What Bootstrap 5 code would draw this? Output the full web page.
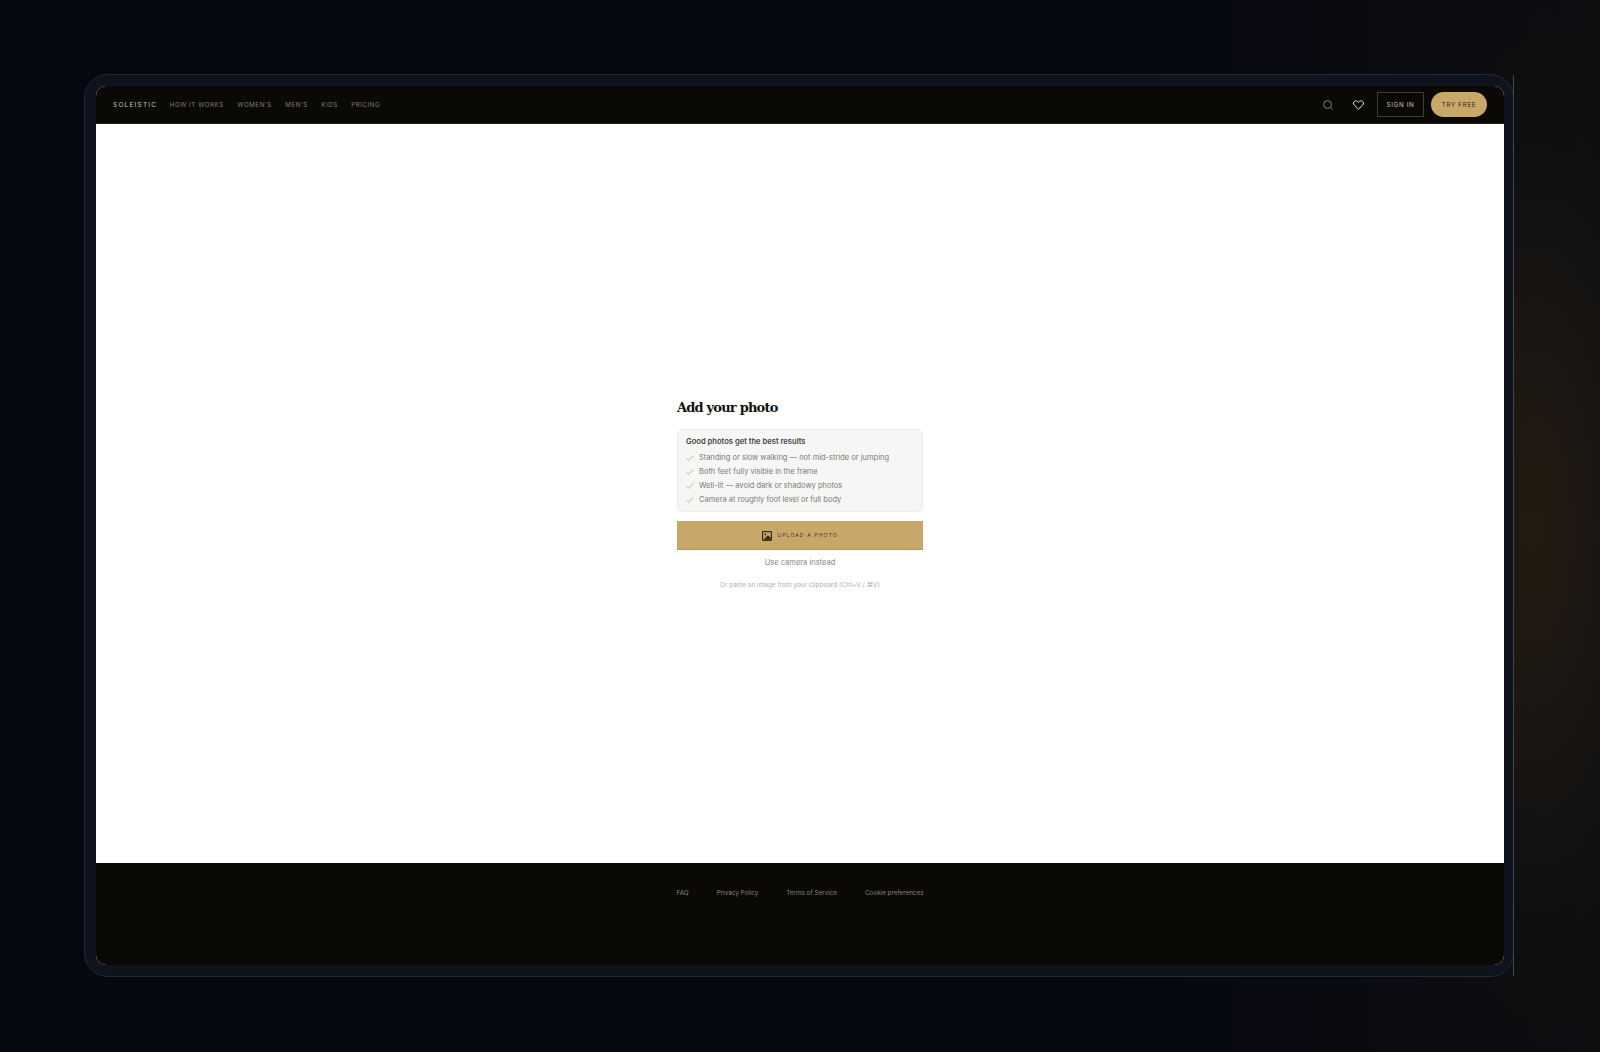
<!DOCTYPE html>
<html lang="en"><head><meta charset="utf-8"><title>Soleistic</title>
<link href="https://cdn.jsdelivr.net/npm/bootstrap@5.3.0/dist/css/bootstrap.min.css" rel="stylesheet">
<style>
html,body{height:100%}
body{background:radial-gradient(ellipse 190px 560px at 1535px 530px,#241b10 0%,rgba(27,23,18,.9) 35%,rgba(18,17,17,.45) 70%,rgba(14,14,16,0) 100%),linear-gradient(90deg,#060810 0,#060810 70%,#0e0e11 100%);font-family:"Inter","Noto Sans",sans-serif;overflow:hidden}
.stage{height:1052px;padding:74px 86px 75px 84px}
.device{height:903px;padding:11px 9px 11px 11px;background:#0f131d;border:1px solid #232835;border-radius:24px;position:relative}
.device::after{content:"";position:absolute;right:-1px;top:0;bottom:0;width:1px;background:#45464a}
.screen{height:100%;border-radius:10px;overflow:hidden;background:#fff}
.topbar{height:38px;background:#0b0906;padding:0 17px;border-bottom:1px solid #1c1b18}
.left-group{padding-top:1px}
.brand-word{font-size:6.6px;letter-spacing:1.16px;color:#c9c6bf;padding-top:1px}
.menu-link{font-size:6.2px;letter-spacing:.55px;color:#807d77;text-decoration:none}
.menu-row{gap:13.5px;margin-left:12.5px}
.action-row{gap:7px}
.icon-slot{width:23px;height:24px}
.icon-shift{margin-right:1px;margin-left:-1px}
.signin{height:25px;width:47px;font-size:6.3px;letter-spacing:.65px;color:#c3c0b9;border:1px solid #3f3d39;background:transparent;padding-top:2px!important}
.tryfree{height:25px;width:56px;font-size:6.3px;letter-spacing:.65px;color:#33270f;background:#c8a86a;border-radius:13px;padding-top:2px!important}
.stagebody{height:739px}
.panel{width:246px}
.panel-title{font-family:"DejaVu Serif","Liberation Serif",serif;font-size:13px;font-weight:700;color:#111;margin:0 0 12px;line-height:20px;padding-top:1px;height:20px;letter-spacing:-.8px}
.tips{background:#f6f6f5;border:1px solid #ececea;border-radius:6px;padding:6.5px 8px 5px;height:83px}
.tips-head{font-size:7.6px;font-weight:600;color:#444;line-height:10px;margin-bottom:4px}
.tip{font-size:7.5px;color:#7a7a78;line-height:14.28px;gap:5px}
.tip svg{flex:none}
.upload{height:29px;margin-top:9px;padding-top:1px;background:#c8a86a;color:#4a3a1c;font-size:5.2px;letter-spacing:1.05px;border-bottom:1px solid #b7985c;gap:5px}
.camera{font-size:7.5px;color:#858583;line-height:12px;margin-top:7px}
.paste{font-size:6.45px;color:#b0b0ae;line-height:10px;margin-top:11px}
.foot{height:102px;background:#0b0906;padding-top:23px;gap:28px}
.foot-link{font-size:6.3px;color:#85827c;text-decoration:none;line-height:14px}
</style></head><body>
<div class="stage"><div class="device"><div class="screen d-flex flex-column">
<nav class="topbar d-flex align-items-center justify-content-between">
 <div class="left-group d-flex align-items-center"><span class="brand-word">SOLEISTIC</span>
  <div class="menu-row d-flex"><a class="menu-link" href="#">HOW IT WORKS</a><a class="menu-link" href="#">WOMEN'S</a><a class="menu-link" href="#">MEN'S</a><a class="menu-link" href="#">KIDS</a><a class="menu-link" href="#">PRICING</a></div></div>
 <div class="action-row d-flex align-items-center">
  <span class="icon-slot icon-shift d-flex align-items-center justify-content-center"><svg width="10" height="10" viewBox="0 0 10 10" fill="none" stroke="#a5a29b" stroke-width=".8"><circle cx="4.6" cy="4.6" r="3.9"/><path d="M7.4 7.4l2.2 2.2"/></svg></span>
  <span class="icon-slot d-flex align-items-center justify-content-center"><svg width="11" height="10" viewBox="0 0 11 10" fill="none" stroke="#e6e4de" stroke-width="1"><path d="M5.5 9.2 1.3 5.1C.1 3.9.3 2 1.7 1.2c1.3-.7 2.8-.3 3.8 1 1-1.3 2.5-1.7 3.8-1 1.4.8 1.6 2.7.4 3.9z"/></svg></span>
  <button class="signin btn p-0 rounded-0">SIGN IN</button>
  <button class="tryfree btn p-0 border-0">TRY FREE</button>
 </div>
</nav>
<main class="stagebody d-flex align-items-center justify-content-center bg-white"><div class="panel">
 <h1 class="panel-title">Add your photo</h1>
 <div class="tips">
  <div class="tips-head">Good photos get the best results</div>
  <div class="tip d-flex align-items-center"><svg width="8" height="6" viewBox="0 0 8 6" fill="none" stroke="#a9b184" stroke-width=".8"><path d="M.5 3l2.2 2.3L7.5.5"/></svg>Standing or slow walking — not mid-stride or jumping</div>
  <div class="tip d-flex align-items-center"><svg width="8" height="6" viewBox="0 0 8 6" fill="none" stroke="#a9b184" stroke-width=".8"><path d="M.5 3l2.2 2.3L7.5.5"/></svg>Both feet fully visible in the frame</div>
  <div class="tip d-flex align-items-center"><svg width="8" height="6" viewBox="0 0 8 6" fill="none" stroke="#a9b184" stroke-width=".8"><path d="M.5 3l2.2 2.3L7.5.5"/></svg>Well-lit — avoid dark or shadowy photos</div>
  <div class="tip d-flex align-items-center"><svg width="8" height="6" viewBox="0 0 8 6" fill="none" stroke="#a9b184" stroke-width=".8"><path d="M.5 3l2.2 2.3L7.5.5"/></svg>Camera at roughly foot level or full body</div>
 </div>
 <div class="upload d-flex align-items-center justify-content-center"><svg width="10" height="10" viewBox="0 0 10 10"><rect width="10" height="10" rx="1.2" fill="#3a2c12"/><rect x="1.2" y="1.2" width="7.6" height="7.6" fill="#c8a86a"/><circle cx="3.4" cy="3.4" r=".9" fill="#3a2c12"/><path d="M1.2 8.8 6 4.2l2.8 2.6v2z" fill="#3a2c12"/></svg>UPLOAD A PHOTO</div>
 <div class="camera text-center">Use camera instead</div>
 <div class="paste text-center">Or paste an image from your clipboard (Ctrl+V / ⌘V)</div>
</div></main>
<footer class="foot d-flex justify-content-center"><a class="foot-link" href="#">FAQ</a><a class="foot-link" href="#">Privacy Policy</a><a class="foot-link" href="#">Terms of Service</a><a class="foot-link" href="#">Cookie preferences</a></footer>
</div></div></div>
<script src="https://cdn.jsdelivr.net/npm/bootstrap@5.3.0/dist/js/bootstrap.bundle.min.js"></script>
</body></html>
